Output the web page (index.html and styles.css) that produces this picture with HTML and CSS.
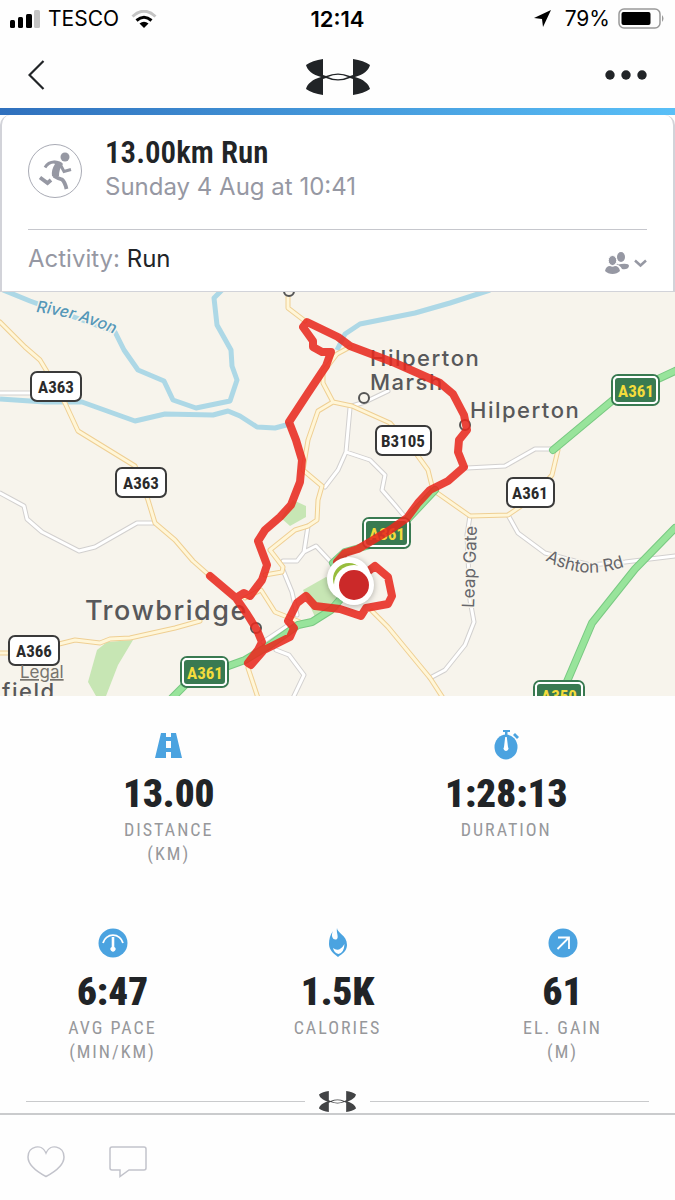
FILE: index.html
```html
<!DOCTYPE html>
<html lang="en">
<head>
    <meta charset="UTF-8">
    <meta name="viewport" content="width=device-width, initial-scale=1.0">
    <title>13.00km Run</title>
    <link rel="stylesheet" href="styles.css">
</head>
<body>
    <!-- shared logo -->
    <svg class="defs" aria-hidden="true">
        <symbol id="ua-logo" viewBox="0 0 64 36">
            <path d="M17 0C10 1 4 3 0 6C1 11 7 16 15 18C7 20 1 25 0 30C4 33 10 35 17 36V20L20 19Q32 24 44 19L47 20V36C54 35 60 33 64 30C63 25 57 20 49 18C57 16 63 11 64 6C60 3 54 1 47 0V16L44 17Q32 12 20 17L17 16ZM22 18Q32 13.500 42 18Q32 22.500 22 18Z" fill="currentColor" fill-rule="evenodd"/>
        </symbol>
    </svg>

    <div class="status-bar">
        <div class="status-left">
            <svg class="signal" width="30" height="18" viewBox="0 0 30 18">
                <rect x="0" y="10" width="5" height="8" rx="1.5"/>
                <rect x="8" y="7" width="5" height="11" rx="1.5"/>
                <rect x="16" y="4" width="6" height="14" rx="1.5"/>
                <rect x="24" y="0" width="6" height="18" rx="1.5" fill="#c4c4c4"/>
            </svg>
            <span>TESCO</span>
            <svg class="wifi" width="26" height="18" viewBox="0 0 26 18" fill="none">
                <path d="M1.500 6.500Q13 -4 24.500 6.500" stroke="#c4c4c4" stroke-width="3"/>
                <path d="M5.500 10.500Q13 4 20.500 10.500" stroke="#000" stroke-width="3"/>
                <path d="M13 18L8.500 13.500Q13 10 17.500 13.500Z" fill="#000"/>
            </svg>
        </div>
        <time class="clock">12:14</time>
        <div class="status-right">
            <svg width="18" height="17" viewBox="0 0 18 17"><path d="M17 0L9 17L8 9L0 8Z"/></svg>
            <span>79%</span>
            <svg width="47" height="21" viewBox="0 0 47 21">
                <rect x="1" y="1" width="41" height="19" rx="5" fill="none" stroke="#999" stroke-width="1.500"/>
                <rect x="3.500" y="4" width="29" height="13" rx="2"/>
                <path d="M44 7Q47 10.500 44 14Z" fill="#999"/>
            </svg>
        </div>
    </div>

    <header class="top-nav">
        <button class="icon-btn" aria-label="Back">
            <svg width="17" height="30" viewBox="0 0 17 30"><path d="M15.500 1L1.500 15L15.500 29" fill="none" stroke="currentColor" stroke-width="2.200"/></svg>
        </button>
        <svg class="nav-logo" role="img" aria-label="Under Armour"><use href="#ua-logo"/></svg>
        <button class="icon-btn" aria-label="More">
            <svg width="42" height="10" viewBox="0 0 42 10" fill="currentColor"><circle cx="5" cy="5" r="4.700"/><circle cx="21" cy="5" r="4.700"/><circle cx="37" cy="5" r="4.700"/></svg>
        </button>
    </header>
    <div class="gradient-bar"></div>

    <main>
        <section class="workout-card">
            <div class="workout-head">
                <div class="workout-icon">
                    <svg width="34" height="38" viewBox="0 0 34 38" fill="none" stroke="currentColor">
                        <circle cx="27" cy="5" r="4.500" fill="currentColor" stroke="none"/>
                        <path d="M14 9Q22 8 25 12Q21 17 21 24Q18 27 14 24Q13 18 17 12Z" fill="currentColor" stroke="none"/>
                        <path d="M20 10.500Q11 8.500 7 15.500" stroke-width="3"/>
                        <path d="M22 12L26 19.500L33 17.500" stroke-width="3"/>
                        <path d="M16 24Q19 26 24 27.500Q27 30 28.500 37" stroke-width="3.800"/>
                        <path d="M13 28L9.500 31L2 25.500" stroke-width="3.800"/>
                    </svg>
                </div>
                <div>
                    <h1>13.00km Run</h1>
                    <p class="workout-date">Sunday 4 Aug at 10:41</p>
                </div>
            </div>
            <div class="activity-row">
                <p><span class="muted">Activity:</span> Run</p>
                <button class="icon-btn privacy" aria-label="Privacy">
                    <svg width="42" height="23" viewBox="0 0 42 23" fill="currentColor">
                        <ellipse cx="16" cy="5" rx="4" ry="5"/>
                        <path d="M12 11.500Q13 13 16 12Q24 11 24 14Q23 18 17 17Q15 13 11.500 12.500Z"/>
                        <ellipse cx="7.500" cy="8.500" rx="4.200" ry="5" stroke="#fff"/>
                        <path d="M0 19Q1 14 5 14Q7.500 15.500 10 14Q14 14 15 19Q12 22 7.500 22Q3 22 0 19Z"/>
                        <path d="M30 8.500L35.500 13.500L41 8.500" fill="none" stroke="currentColor" stroke-width="2.500"/>
                    </svg>
                </button>
            </div>
        </section>

        <svg class="map" viewBox="0 292 675 404" role="img" aria-label="Route map around Trowbridge">
            <rect class="land" x="0" y="292" width="675" height="404"/>

            <g class="park">
                <path d="M107 642L133 640L118 665L106 696H96L88 682L97 650Z"/>
                <path d="M293 500L306 506V517L290 526L281 518Z"/>
                <path d="M303 590L326 577L347 590L338 610L315 617Z"/>
            </g>

            <g class="river">
                <path d="M3 290L30 301L115 332L124 350L138 370L164 381L173 400L196 408L230 401L237 380L232 366L231 350L217 325L214 298L222 290"/>
                <path d="M0 399L45 402L82 402L135 421L165 414L213 415L228 411L240 416L257 427L275 428L290 424"/>
                <path d="M337 350L345 334L360 324L415 313L450 303L490 290"/>
            </g>

            <!-- roads: outline first, fill on top -->
            <defs>
                <path id="minor" d="M0 393H32M0 493L24 506L27 519L42 532L79 551L95 547L137 523H155M350 408L346 452L338 470L325 487M346 452L370 460L385 475L382 490L395 505L405 517M308 526L304 552L297 561H283M304 552L316 546L331 562M283 570L292 592L297 615M352 406L365 402L388 391M467 468L505 466L535 449H555M508 515L518 533L545 553L590 565L625 562L675 556M470 516L467 535L470 600L474 622L465 645L445 670L430 678M276 650L289 655L304 675L293 698M263 642L287 626"/>
                <path id="major" d="M0 322L25 347L40 360L55 385L65 403L78 431L135 466L148 500L155 523L175 540L193 561L210 576M0 653H15M55 645L75 640L100 643L110 639L130 638L175 628L200 621M288 292V308L305 321M350 347L337 354L323 372V383L333 402L352 406L390 423L415 452L428 470L433 490L470 516L508 515L530 500L552 475L558 450M333 402L318 411L308 440L303 470L322 486L318 500L317 520L308 526L295 530L270 550L283 567L282 572L265 575M245 598L261 590L275 612L290 618L300 622M372 611L388 627L430 678L443 698M248 668L258 698"/>
                <path id="trunk" d="M553 450L613 400L675 371M172 698L190 680L245 660L270 645L298 625L312 622L331 610L350 588L333 563L345 552L370 545L405 522L435 490M560 698L592 623L635 569L675 528"/>
            </defs>
            <g class="roads">
                <use href="#minor" class="minor-line"/><use href="#minor" class="minor-fill"/>
                <use href="#major" class="major-line"/><use href="#major" class="major-fill"/>
                <use href="#trunk" class="trunk-line"/><use href="#trunk" class="trunk-fill"/>
            </g>

            <!-- labels -->
            <defs>
                <path id="avon" d="M36 312Q74 316 119 336"/>
                <path id="ashton" d="M545 560Q585 583 632 564"/>
            </defs>
            <text class="water-label"><textPath href="#avon">River Avon</textPath></text>
            <text class="road-label"><textPath href="#ashton">Ashton Rd</textPath></text>
            <text class="road-label" transform="translate(474 608) rotate(-88)">Leap Gate</text>

            <g class="place">
                <circle cx="289" cy="291" r="5"/>
                <circle cx="364" cy="398" r="5"/>
                <circle cx="465" cy="425" r="5"/>
                <circle cx="256" cy="628" r="5"/>
                <text x="370" y="366">Hilperton</text>
                <text x="370" y="390">Marsh</text>
                <text x="470" y="418">Hilperton</text>
                <text x="2" y="699">field</text>
                <text class="town" x="85" y="620">Trowbridge</text>
            </g>

            <g class="shield">
                <rect x="31" y="372" width="50" height="29" rx="6"/><text x="56" y="393">A363</text>
                <rect x="116" y="468" width="50" height="29" rx="6"/><text x="141" y="489">A363</text>
                <rect x="376" y="426" width="55" height="29" rx="6"/><text x="403" y="447">B3105</text>
                <rect x="507" y="478" width="47" height="29" rx="6"/><text x="530" y="499">A361</text>
                <rect x="9" y="636" width="50" height="29" rx="6"/><text x="34" y="657">A366</text>
            </g>
            <g class="shield green">
                <rect x="612" y="375" width="47" height="30" rx="6"/><rect class="inner" x="614" y="377" width="43" height="26" rx="4"/><text x="636" y="397">A361</text>
                <rect x="363" y="518" width="47" height="30" rx="6"/><rect class="inner" x="365" y="520" width="43" height="26" rx="4"/><text x="387" y="540">A361</text>
                <rect x="181" y="657" width="47" height="30" rx="6"/><rect class="inner" x="183" y="659" width="43" height="26" rx="4"/><text x="205" y="679">A361</text>
                <rect x="534" y="681" width="50" height="30" rx="6"/><rect class="inner" x="536" y="683" width="46" height="26" rx="4"/><text x="559" y="702">A350</text>
            </g>
            <a href="#legal"><text class="legal" x="20" y="678">Legal</text></a>

            <!-- recorded route -->
            <path class="route" d="M337 562L345 553L358 549L390 530L407 518L418 503L430 490L448 481L464 467L458 452L459 440L467 430L464 415L453 394L440 383L395 363L350 346L338 337L307 322L303 327L313 341V347L322 352L331 352L326 366L308 393L289 422L296 440L302 460L300 482L291 505L280 517L265 530L258 541L267 565L262 580L250 596L244 593L236 598L210 576L236 598L247 614L257 630L262 642L258 650L248 663L251 665L264 650L290 637L294 628L288 621L297 603L306 596L315 606L340 609L361 616L366 608L388 604L392 596L388 577L375 566L366 573L345 563Z"/>

            <g class="pin">
                <circle cx="349" cy="579" r="22"/>
                <circle class="start" cx="349" cy="579" r="16"/>
                <circle cx="354" cy="585" r="20"/>
                <circle class="finish" cx="354" cy="585" r="15"/>
            </g>
        </svg>

        <section class="stats">
            <div class="stat-row">
                <div class="stat">
                    <svg width="30" height="30" viewBox="0 0 30 30" fill="currentColor"><path d="M7 3H12V7H17V3H22L28 28H17V22H12V28H1ZM12 11V18H17V11Z" fill-rule="evenodd"/></svg>
                    <strong>13.00</strong>
                    <span>DISTANCE<br>(KM)</span>
                </div>
                <div class="stat">
                    <svg width="30" height="30" viewBox="0 0 30 30" fill="currentColor"><path d="M12 0H19V2H16.500V6H14V2H12Z"/><ellipse cx="15" cy="17" rx="11.500" ry="12.500"/><path d="M22 5L24 3L28 7L26 9Z"/><path d="M14.200 7H15.800L17 17A2.500 2.500 0 1 1 13 17Z" fill="#fff"/></svg>
                    <strong>1:28:13</strong>
                    <span>DURATION</span>
                </div>
            </div>
            <div class="stat-row">
                <div class="stat">
                    <svg width="30" height="30" viewBox="0 0 30 30" fill="currentColor"><circle cx="15" cy="15" r="14.500"/><path d="M5 15A10.300 10.300 0 0 1 25 15" fill="none" stroke="#fff" stroke-width="1.800"/><path d="M13.700 9H16.300V19A2.500 2.500 0 1 1 13.700 19Z" fill="#fff"/></svg>
                    <strong>6:47</strong>
                    <span>AVG PACE<br>(MIN/KM)</span>
                </div>
                <div class="stat">
                    <svg width="30" height="30" viewBox="0 0 30 30" fill="currentColor"><path d="M14 0C14 5 24 7 24 17C24 23 19 26 15 29C11 26 6 22 6 16C6 11 7 7 10 3C7 9 11 13 14 11C16 9 13 4 14 0Z"/><path d="M10 20Q16 25 21.500 16Q21 25 15.500 26Q11 25 10 20Z" fill="#fff"/></svg>
                    <strong>1.5K</strong>
                    <span>CALORIES</span>
                </div>
                <div class="stat">
                    <svg width="30" height="30" viewBox="0 0 30 30" fill="currentColor"><circle cx="15" cy="15" r="14.500"/><path d="M10 9.500H21V21M21 9.500L9.500 21" fill="none" stroke="#fff" stroke-width="1.800"/></svg>
                    <strong>61</strong>
                    <span>EL. GAIN<br>(M)</span>
                </div>
            </div>
        </section>

        <div class="logo-divider"><svg aria-hidden="true"><use href="#ua-logo"/></svg></div>
    </main>

    <footer>
        <button class="icon-btn" aria-label="Like">
            <svg width="38" height="32" viewBox="0 0 38 32"><path d="M19 30.500Q1 21 1 11C1 0 15-3 19 7C23-3 37 0 37 11Q37 21 19 30.500Z"/></svg>
        </button>
        <button class="icon-btn" aria-label="Comment">
            <svg width="38" height="32" viewBox="0 0 38 32"><path d="M3 1H35Q37 1 37 3V22Q37 24 35 24H20L11 30.500V24H3Q1 24 1 22V3Q1 1 3 1Z"/></svg>
        </button>
    </footer>
</body>
</html>
```
FILE: styles.css
```css
* {
    box-sizing: border-box;
}

body {
    margin: 0;
    font-family: Inter, "Liberation Sans", sans-serif;
    color: #212427;
    background-color: #fefefe;
}

h1, p {
    margin: 0;
}

.defs {
    display: none;
}

.icon-btn {
    display: flex;
    padding: 0;
    border: none;
    background: none;
    color: #212427;
    cursor: pointer;
}

.status-bar {
    display: grid;
    grid-template-columns: 1fr auto 1fr;
    align-items: center;
    height: 37px;
    padding: 0 10px;
    font-size: 21px;
    color: #000;
}

.status-left, .status-right {
    display: flex;
    align-items: center;
    gap: 8px;
}

.wifi {
    margin-left: 4px;
}

.status-right {
    justify-content: flex-end;
}

.status-right span {
    margin-left: 5px;
}

.clock {
    font-size: 22px;
    font-weight: 600;
}

.top-nav {
    display: grid;
    grid-template-columns: 1fr auto 1fr;
    align-items: center;
    height: 71px;
    padding: 4px 28px 0;
}

.top-nav .icon-btn:last-child {
    justify-self: end;
}

.nav-logo {
    width: 64px;
    height: 36px;
    margin-top: 4px;
}

.gradient-bar {
    height: 7px;
    background: linear-gradient(90deg, #2f70bd, #4498da 50%, #59bff7);
}

.workout-card {
    padding: 20px 26px 0;
    border: 2px solid #d2d3d9;
    border-top: none;
    border-bottom-width: 1px;
    border-radius: 10px 10px 0 0;
    background-color: #fff;
}

.workout-head {
    display: flex;
    gap: 23px;
    padding-bottom: 26px;
    border-bottom: 1px solid #c6c7cd;
}

.workout-icon {
    display: flex;
    justify-content: center;
    align-items: center;
    width: 54px;
    height: 54px;
    margin-top: 9px;
    border: 1px solid #a9abb5;
    border-radius: 50%;
    color: #9698a3;
}

h1 {
    font-family: "Roboto Condensed", "Liberation Sans Narrow", Roboto, sans-serif;
    font-size: 31px;
    font-weight: 600;
    line-height: 36px;
}

.workout-date {
    font-size: 24px;
    line-height: 32px;
    color: #9698a3;
}

.activity-row {
    display: flex;
    justify-content: space-between;
    align-items: center;
    height: 61px;
    padding-bottom: 4px;
    font-size: 24px;
}

.muted, .privacy {
    color: #9698a3;
}

.privacy {
    margin-top: 10px;
}

.map {
    display: block;
    width: 100%;
    height: auto;
}

.land {
    fill: #f7f4ec;
}

.park {
    fill: #c7e6b4;
}

.river {
    fill: none;
    stroke: #add8e6;
    stroke-width: 5;
    stroke-linejoin: round;
}

.roads {
    fill: none;
    stroke-linejoin: round;
    stroke-linecap: round;
}

.minor-line {
    stroke: #d2d0cf;
    stroke-width: 5;
}

.minor-fill {
    stroke: #fff;
    stroke-width: 3;
}

.major-line {
    stroke: #efcf93;
    stroke-width: 5;
}

.major-fill {
    stroke: #fff6d8;
    stroke-width: 3;
}

.trunk-line {
    stroke: #79c982;
    stroke-width: 8;
}

.trunk-fill {
    stroke: #98e49b;
    stroke-width: 6;
}

.water-label {
    font-size: 16px;
    font-style: italic;
    font-weight: 500;
    fill: #5497b8;
    stroke: #f7f4ec;
    stroke-width: 3px;
    paint-order: stroke;
}

.road-label {
    font-size: 17px;
    fill: #66666a;
    stroke: #f7f4ec;
    stroke-width: 3px;
    paint-order: stroke;
}

.place circle {
    fill: #f7f4ec;
    stroke: #555;
    stroke-width: 2;
}

.place text {
    font-size: 22px;
    font-weight: 500;
    letter-spacing: 1.5px;
    fill: #58585a;
}

.place .town {
    font-size: 27px;
}

.shield rect {
    fill: #fff;
    stroke: #3a3a3a;
    stroke-width: 2;
}

.shield text {
    font-family: "Roboto Condensed", "Liberation Sans Narrow", Roboto, sans-serif;
    font-size: 17px;
    font-weight: 700;
    text-anchor: middle;
    fill: #2b2b2b;
}

.green rect {
    fill: #fff;
    stroke: #397a51;
}

.green .inner {
    fill: #397a51;
    stroke: #fff;
}

.shield.green text {
    fill: #f4dc3c;
}

.legal {
    font-size: 17px;
    fill: #77746e;
    text-decoration: underline;
}

.route {
    fill: none;
    stroke: #e8281e;
    stroke-width: 8;
    stroke-linecap: round;
    stroke-linejoin: round;
    opacity: 0.87;
}

.pin {
    fill: #fff;
    filter: drop-shadow(0 1px 3px rgba(0, 0, 0, 0.3));
}

.start {
    fill: #97bd3d;
}

.finish {
    fill: #cb2929;
}

.stats {
    padding-top: 34px;
}

.stat-row {
    display: grid;
    grid-auto-flow: column;
    grid-auto-columns: 1fr;
    margin-bottom: 62px;
}

.stat-row:last-child {
    margin-bottom: 27px;
}

.stat {
    display: flex;
    flex-direction: column;
    align-items: center;
    text-align: center;
    color: #4ba3e0;
}

.stat strong {
    margin: 13px 0 3px;
    font-family: "Roboto Condensed", "Liberation Sans Narrow", Roboto, sans-serif;
    font-size: 39px;
    font-weight: 900;
    line-height: 42px;
    color: #212427;
}

.stat span {
    font-family: "Roboto Condensed", "Liberation Sans Narrow", Roboto, sans-serif;
    font-size: 18px;
    line-height: 24px;
    letter-spacing: 2px;
    color: #97989b;
}

.logo-divider {
    display: flex;
    align-items: center;
    gap: 14px;
    padding: 0 26px;
    color: #424345;
}

.logo-divider::before, .logo-divider::after {
    content: "";
    flex: 1;
    height: 1px;
    background-color: #c9cacc;
}

.logo-divider svg {
    width: 37px;
    height: 21px;
}

footer {
    display: flex;
    gap: 44px;
    padding: 31px 27px;
    margin-top: 1px;
    border-top: 2px solid #cacbcd;
}

footer svg {
    fill: none;
    stroke: #c2c3cb;
    stroke-width: 1.5px;
}
```
